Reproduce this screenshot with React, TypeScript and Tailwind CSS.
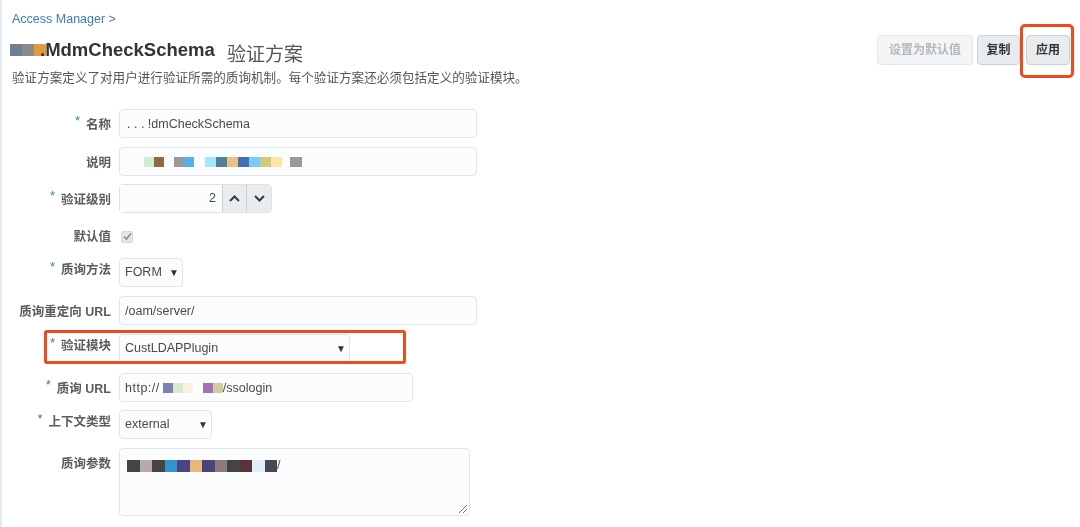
import type { ReactNode } from "react";

const CJK = "font-['Liberation_Sans','Noto_Sans_CJK_SC',sans-serif]";

// Redacted bits of the form, drawn as runs of coloured pixels
function Mosaic({ colors, size = "h-2.5 w-2.5" }: { colors: string[]; size?: string }) {
  return (
    <span className="inline-flex align-middle">
      {colors.map((color, i) => (
        <span key={i} className={`${size} ${color}`} />
      ))}
    </span>
  );
}

function FieldRow({
  label,
  required,
  height = "h-[29px]",
  raised,
  children,
}: {
  label: string;
  required?: boolean;
  height?: string;
  raised?: boolean;
  children: ReactNode;
}) {
  return (
    <div className={`flex gap-2 ${height}`}>
      <div
        className={`flex h-[29px] w-[99px] shrink-0 items-center justify-end whitespace-nowrap text-[12.5px] font-bold text-[#5c5c5c] ${raised ? "pb-1" : "pt-[3px]"}`}
      >
        {required && <span className="mr-1.5 -mt-2 text-[13px] font-normal text-[#2f7fbd]">*</span>}
        {label}
      </div>
      {children}
    </div>
  );
}

const boxClass =
  "flex h-[29px] items-center rounded-sm border border-[#e1e6eb] bg-[#fbfcfd] px-[5px] text-[12.5px] text-[#4a4a4a]";

function SelectBox({ value, width }: { value: string; width: string }) {
  return (
    <div className={`${boxClass} ${width} justify-between`}>
      <span>{value}</span>
      <span className="-mr-[2px] text-[10px] text-[#333]">▼</span>
    </div>
  );
}

export default function App() {
  return (
    <div className={`relative h-[527px] w-[1080px] overflow-hidden border-l-2 border-[#e3ebf3] bg-white pl-2.5 pt-[11px] blur-[0.5px] ${CJK}`}>
      <div className="h-4 text-[12.5px] leading-4 text-[#3f7cb5]">Access Manager &gt;</div>

      <div className="mt-2 flex h-[30px] items-start justify-between pr-2.5">
        <div className="flex items-center">
          <div className="-ml-0.5 flex h-[30px] w-[207px] items-center">
            <Mosaic colors={["bg-[#6f7f8f]", "bg-[#8a8a8a]", "bg-[#e39a3a]"]} size="mb-1 h-3 w-3" />
            <span className="-ml-1.5 mb-1 text-[18.5px] font-bold text-[#333]">.MdmCheckSchema</span>
          </div>
          <span className="mt-1.5 ml-2.5 text-[19px] text-[#555]">验证方案</span>
        </div>
        <div className="flex">
          <button className="h-[30px] w-24 rounded-sm border border-[#e3e7eb] bg-[#f3f5f7] text-xs font-bold text-[#b4b8bc]">
            设置为默认值
          </button>
          <button className="ml-1 h-[30px] w-[43px] rounded-sm border border-[#c9d0d6] bg-[#e9ecef] text-xs font-bold text-[#333]">
            复制
          </button>
          <button className="ml-1.5 h-[30px] w-11 rounded-sm border border-[#c9d0d6] bg-[#e9ecef] text-xs font-bold text-[#333]">
            应用
          </button>
        </div>
      </div>

      <p className="mt-1 h-[18px] text-[12.58px] leading-[18px] text-[#555]">
        验证方案定义了对用户进行验证所需的质询机制。每个验证方案还必须包括定义的验证模块。
      </p>

      <div className="mt-[22px] flex flex-col gap-2">
        <FieldRow label="名称" required height="h-[30px]">
          <div className={`${boxClass} w-[358px] pt-px`}>
            <span className="ml-0.5">. . . !dmCheckSchema</span>
          </div>
        </FieldRow>

        <FieldRow label="说明">
          <div className={`${boxClass} w-[358px] pl-6`}>
            <Mosaic colors={["bg-[#d3eccf]", "bg-[#8f6a3f]"]} />
            <span className="w-2.5" />
            <Mosaic colors={["bg-[#9a9a9a]", "bg-[#55b0ea]"]} />
            <span className="w-[11px]" />
            <Mosaic
              colors={["bg-[#a5e6fb]", "bg-[#527f9c]", "bg-[#e8c384]", "bg-[#4a6cb8]", "bg-[#7accf7]", "bg-[#d2c980]", "bg-[#fde6a4]"]}
              size="h-2.5 w-[11px]"
            />
            <span className="w-2" />
            <Mosaic colors={["bg-[#9a9a9a]"]} size="h-2.5 w-3" />
          </div>
        </FieldRow>

        <FieldRow label="验证级别" required>
          <div className="flex h-[29px] w-[153px] rounded-sm border border-[#dde2e7]">
            <div className="flex w-[102px] items-center justify-end bg-[#fbfcfd] pr-1.5 text-[12.5px] text-[#4a4a4a]">2</div>
            <div className="flex w-[25px] items-center justify-center border-x border-[#c9d0d6] bg-[#e9ecef]">
              <svg width="11" height="7" viewBox="0 0 11 7" fill="none" stroke="#3a3a3a" strokeWidth="2">
                <path d="M1 6l4.5-4.5L10 6" />
              </svg>
            </div>
            <div className="flex flex-1 items-center justify-center bg-[#e9ecef]">
              <svg width="11" height="7" viewBox="0 0 11 7" fill="none" stroke="#3a3a3a" strokeWidth="2">
                <path d="M1 1l4.5 4.5L10 1" />
              </svg>
            </div>
          </div>
        </FieldRow>

        <FieldRow label="默认值">
          <div className="ml-0.5 flex h-[29px] items-center pt-0.5">
            <div className="flex h-3 w-3 items-center justify-center rounded-[2px] border border-[#d8d8d8] bg-[#e6e6e6]">
              <svg width="9" height="9" viewBox="0 0 9 9" fill="none" stroke="#8f8f8f" strokeWidth="1.6">
                <path d="M1 4.5l2.4 2.6L8 1.5" />
              </svg>
            </div>
          </div>
        </FieldRow>

        <FieldRow label="质询方法" required raised height="h-[30px]">
          <SelectBox value="FORM" width="w-16" />
        </FieldRow>

        <FieldRow label="质询重定向 URL" height="h-[30px]">
          <div className={`${boxClass} w-[358px] pt-px`}>/oam/server/</div>
        </FieldRow>

        <FieldRow label="验证模块" required raised height="h-[31px]">
          <SelectBox value="CustLDAPPlugin" width="w-[231px]" />
        </FieldRow>

        <FieldRow label="质询 URL" required>
          <div className={`${boxClass} w-[294px] pt-px`}>
            <span className="tracking-[0.5px]">http://</span>
            <span className="ml-[3px]">
              <Mosaic colors={["bg-[#7f7fb8]", "bg-[#d8eccd]", "bg-[#fbf0e4]", "bg-white", "bg-[#a86fb8]", "bg-[#d2cda0]"]} />
            </span>
            /ssologin
          </div>
        </FieldRow>

        <FieldRow label="上下文类型" required raised height="h-[30px]">
          <SelectBox value="external" width="w-[93px]" />
        </FieldRow>

        <FieldRow label="质询参数" height="h-[68px]">
          <div className="relative h-[68px] w-[351px] rounded-sm border border-[#e1e6eb] bg-[#fbfcfd] px-[7px] pt-[7px] text-[12.5px] text-[#4a4a4a]">
            <Mosaic
              colors={[
                "bg-[#444]",
                "bg-[#b8aaaa]",
                "bg-[#444]",
                "bg-[#3393cc]",
                "bg-[#4a4480]",
                "bg-[#e8b87a]",
                "bg-[#4a4478]",
                "bg-[#8f7a80]",
                "bg-[#444440]",
                "bg-[#5a3338]",
                "bg-[#e0eefa]",
                "bg-[#484850]",
              ]}
              size="h-3 w-[12.5px]"
            />
            /
            <svg className="absolute bottom-0.5 right-0.5" width="8" height="8" viewBox="0 0 8 8" stroke="#777" fill="none">
              <path d="M0 8l8-8M4 8l4-4" />
            </svg>
          </div>
        </FieldRow>
      </div>

      {/* Red annotation frames drawn over the screenshot */}
      <div className="absolute left-[42px] top-[330px] h-[34px] w-[362px] rounded-[3px] border-[3px] border-[#f04a1c]" />
      <div className="absolute left-[1018px] top-6 h-[54px] w-[54px] rounded-[5px] border-[3px] border-[#f04a1c]" />
    </div>
  );
}
